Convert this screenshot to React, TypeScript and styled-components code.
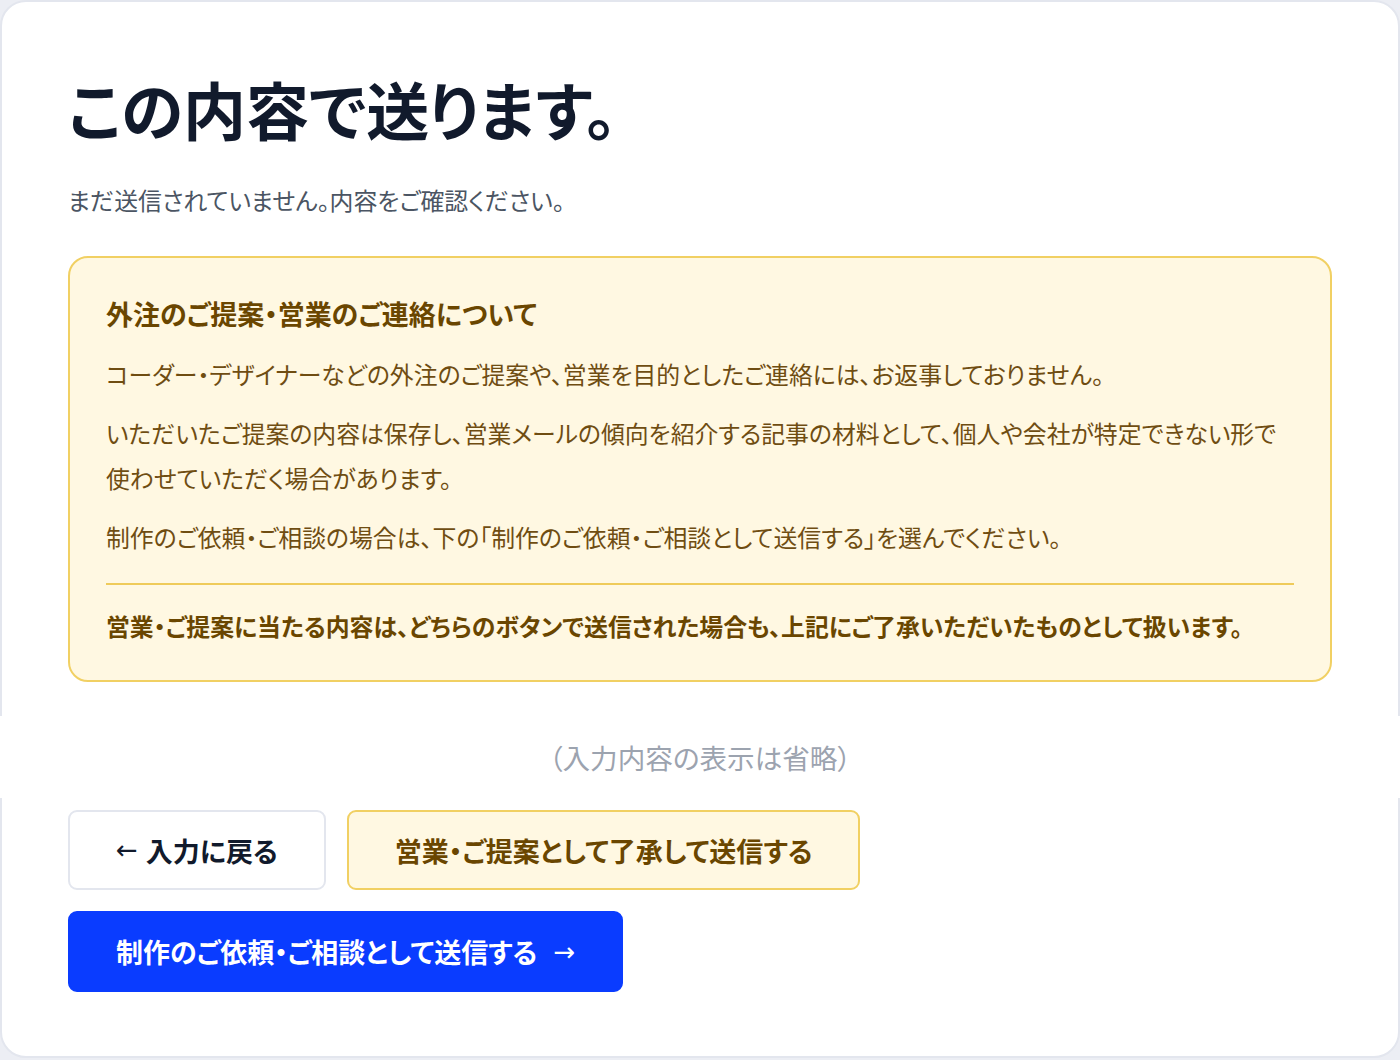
import styled, { createGlobalStyle } from "styled-components";

const GlobalStyle = createGlobalStyle`
    html, body {
        margin: 0;
        padding: 0;
        background: #eceef4;
    }
    body {
        font-family: "Inter", "Noto Sans CJK JP", sans-serif;
        font-feature-settings: "palt";
    }
    * {
        box-sizing: border-box;
    }
`;

const Card = styled.main`
    width: 1400px;
    min-height: 1058px;
    background: #ffffff;
    border: 2px solid #e3e6ee;
    border-radius: 26px;
    padding: 70px 66px 64px;
`;

const Title = styled.h1`
    margin: 0;
    font-size: 63px;
    line-height: 80px;
    font-weight: 700;
    color: #111a2c;
`;

const Lead = styled.p`
    margin: 32px 0 0;
    font-size: 23.9px;
    line-height: 35px;
    color: #4b5563;
`;

const Notice = styled.section`
    margin-top: 37px;
    background: #fff8e2;
    border: 2px solid #f1d063;
    border-radius: 20px;
    padding: 38px 36px 30px;
    color: #6f4d12;
`;

const NoticeTitle = styled.h2`
    margin: 0 0 17px;
    font-size: 27px;
    line-height: 40px;
    font-weight: 700;
    color: #6a4600;
`;

const NoticeText = styled.p<{ $strong?: boolean }>`
    margin: 0 0 14px;
    font-size: 23.85px;
    line-height: 45px;
    font-weight: ${p => (p.$strong ? 700 : 400)};
    color: ${p => (p.$strong ? "#6a4600" : "#6f4d12")};

    &:last-child {
        margin-bottom: 0;
    }
`;

const Divider = styled.hr`
    margin: 22px 0 20px;
    border: 0;
    border-top: 2px solid #efcb5a;
`;

// covers the card edge like in the original, spans past the padding
const Omitted = styled.div`
    margin: 34px -68px 12px;
    height: 82px;
    background: #ffffff;
    position: relative;
    display: flex;
    align-items: center;
    justify-content: center;
    font-size: 27.6px;
    color: #9ca3af;
`;

const Actions = styled.div`
    display: flex;
    flex-wrap: wrap;
    gap: 21px 21px;
`;

const Button = styled.button<{ $variant: "plain" | "accept" | "primary" }>`
    height: ${p => (p.$variant === "primary" ? 81 : 80)}px;
    padding: 0 46px;
    border-radius: 9px;
    font-family: inherit;
    font-feature-settings: "palt";
    font-size: 27px;
    font-weight: 700;
    cursor: pointer;
    display: inline-flex;
    align-items: center;
    gap: 8px;
    border: 2px solid
        ${p => (p.$variant === "plain" ? "#e3e6ee" : p.$variant === "accept" ? "#f1d063" : "#0a3cff")};
    background: ${p => (p.$variant === "plain" ? "#ffffff" : p.$variant === "accept" ? "#fff8e2" : "#0a3cff")};
    color: ${p => (p.$variant === "plain" ? "#111a2c" : p.$variant === "accept" ? "#6a4600" : "#ffffff")};
`;

const Arrow = styled.span`
    font-family: "DejaVu Sans", sans-serif;
    font-weight: 400;
    font-size: 26px;
`;

export default function App() {
    return (<>
        <GlobalStyle/>
        <Card>
            <Title>この内容で送ります。</Title>
            <Lead>まだ送信されていません。内容をご確認ください。</Lead>

            <Notice>
                <NoticeTitle>外注のご提案・営業のご連絡について</NoticeTitle>
                <NoticeText>コーダー・デザイナーなどの外注のご提案や、営業を目的としたご連絡には、お返事しておりません。</NoticeText>
                <NoticeText>いただいたご提案の内容は保存し、営業メールの傾向を紹介する記事の材料として、個人や会社が特定できない形で使わせていただく場合があります。</NoticeText>
                <NoticeText>制作のご依頼・ご相談の場合は、下の「制作のご依頼・ご相談として送信する」を選んでください。</NoticeText>
                <Divider/>
                <NoticeText $strong>営業・ご提案に当たる内容は、どちらのボタンで送信された場合も、上記にご了承いただいたものとして扱います。</NoticeText>
            </Notice>

            <Omitted>（入力内容の表示は省略）</Omitted>

            <Actions>
                <Button $variant="plain"><Arrow>←</Arrow>入力に戻る</Button>
                <Button $variant="accept">営業・ご提案として了承して送信する</Button>
                <Button $variant="primary">制作のご依頼・ご相談として送信する<Arrow>&nbsp;→</Arrow></Button>
            </Actions>
        </Card>
    </>)
}
